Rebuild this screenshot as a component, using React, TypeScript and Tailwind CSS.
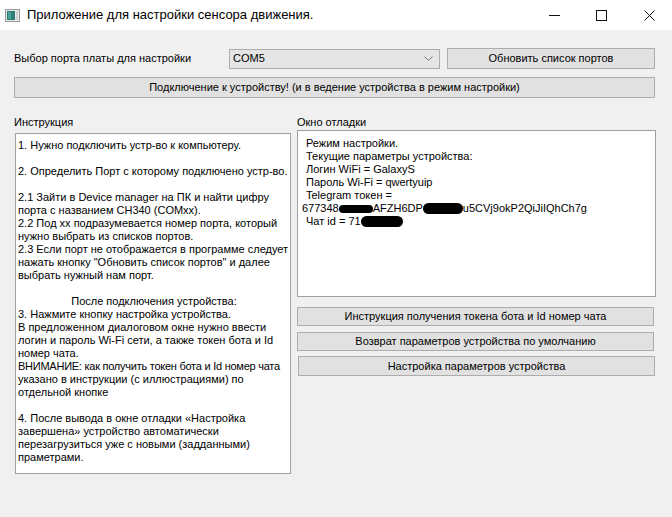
import React from "react";

const ui = { fontFamily: '"Liberation Sans", Arial, sans-serif' };

function Btn({ children, className = "" }: { children: React.ReactNode; className?: string }) {
  return (
    <div
      className={
        "flex items-center justify-center bg-[#e1e1e1] border border-[#adadad] text-[11px] leading-[13px] text-black whitespace-nowrap " +
        className
      }
    >
      {children}
    </div>
  );
}

function Blob({ w, h, className = "" }: { w: number; h: number; className?: string }) {
  return (
    <span
      className={"inline-block bg-black rounded-full align-middle " + className}
      style={{ width: w, height: h }}
    />
  );
}

export default function App() {
  const left: { t: string; c?: boolean; tight?: boolean }[] = [
    { t: "1. Нужно подключить устр-во к компьютеру." },
    { t: "" },
    { t: "2. Определить Порт с которому подключено устр-во." },
    { t: "" },
    { t: "2.1 Зайти в Device manager на ПК и найти цифру" },
    { t: "порта с названием CH340 (COMxx)." },
    { t: "2.2 Под xx подразумевается номер порта, который" },
    { t: "нужно выбрать из списков портов." },
    { t: "2.3 Если порт не отображается в программе следует" },
    { t: 'нажать кнопку "Обновить список портов" и далее' },
    { t: "выбрать нужный нам порт." },
    { t: "" },
    { t: "После подключения устройства:", c: true },
    { t: "3. Нажмите кнопку настройка устройства." },
    { t: "В предложенном диалоговом окне нужно ввести" },
    { t: "логин и пароль Wi-Fi сети, а также токен бота и Id" },
    { t: "номер чата." },
    { t: "ВНИМАНИЕ: как получить токен бота и Id номер чата", tight: true },
    { t: "указано в инструкции (с иллюстрациями) по" },
    { t: "отдельной кнопке" },
    { t: "" },
    { t: "4. После вывода в окне отладки «Настройка" },
    { t: "завершена» устройство автоматически" },
    { t: "перезагрузиться уже с новыми (задданными)" },
    { t: "праметрами." },
  ];

  return (
    <div className="w-[672px] h-[517px] bg-[#f0f0f0] flex flex-col overflow-hidden text-black" style={ui}>
      {/* Title bar */}
      <div className="h-[30px] bg-white flex items-center shrink-0">
        <svg width="15" height="13" viewBox="0 0 15 13" className="ml-[5px] mr-[7px]">
          <rect x="0.5" y="0.5" width="14" height="12" fill="#e8e8e8" stroke="#9a9a9a" />
          <rect x="2" y="2" width="8" height="9" fill="#2f7f78" />
          <rect x="3" y="3" width="3" height="7" fill="#4aa39b" />
          <rect x="11" y="2" width="2" height="9" fill="#d0d0d0" />
        </svg>
        <span className="text-[13px] leading-[20px] text-black">
          Приложение для настройки сенсора движения.
        </span>
        <div className="ml-auto flex items-center h-full">
          <svg width="11" height="11" viewBox="0 0 11 11" className="mr-[36px]">
            <line x1="0" y1="5.5" x2="11" y2="5.5" stroke="#111" strokeWidth="1" />
          </svg>
          <svg width="11" height="11" viewBox="0 0 11 11" className="mr-[37px]">
            <rect x="0.5" y="0.5" width="10" height="10" fill="none" stroke="#111" strokeWidth="1" />
          </svg>
          <svg width="11" height="11" viewBox="0 0 11 11" className="mr-[17px]">
            <path d="M0.5 0.5 L10.5 10.5 M10.5 0.5 L0.5 10.5" stroke="#111" strokeWidth="1" />
          </svg>
        </div>
      </div>

      {/* Row 1 */}
      <div className="mt-[18px] h-[21px] flex items-center pl-[14px]">
        <span className="w-[215px] text-[11px] leading-[13px]">Выбор порта платы для настройки</span>
        <div className="w-[211px] h-[20px] bg-[#e5e5e5] border border-[#adadad] flex items-center pl-[3px] pr-[6px] text-[11px]">
          <span>COM5</span>
          <svg width="9" height="5" viewBox="0 0 9 5" className="ml-auto">
            <path d="M0.5 0.5 L4.5 4.5 L8.5 0.5" fill="none" stroke="#7a7a7a" strokeWidth="1" />
          </svg>
        </div>
        <Btn className="ml-[7px] w-[208px] h-[21px]">Обновить список портов</Btn>
      </div>

      {/* Row 2 */}
      <div className="mt-[8px] pl-[14px]">
        <Btn className="w-[641px] h-[21px]">Подключение к устройству! (и в ведение устройства в режим настройки)</Btn>
      </div>

      {/* Columns */}
      <div className="mt-[18px] flex pl-[14px]">
        <div className="w-[277px] flex flex-col">
          <div className="text-[11px] leading-[13px]">Инструкция</div>
          <div className="mt-[4px] ml-[1px] w-[276px] h-[341px] bg-white border border-[#a0a0a0] pt-[5px] pl-[2px] text-[11px] leading-[13px] overflow-hidden">
            {left.map((l, i) => (
              <div
                key={i}
                className={
                  "h-[13px] whitespace-nowrap " +
                  (l.c ? "text-center " : "") +
                  (l.tight ? "tracking-[-0.25px]" : "")
                }
              >
                {l.t}
              </div>
            ))}
          </div>
        </div>
        <div className="ml-[6px] w-[359px] flex flex-col">
          <div className="text-[11px] leading-[13px]">Окно отладки</div>
          <div className="mt-[1px] w-[359px] h-[167px] bg-white border border-[#a0a0a0] pt-[6px] pl-[4px] text-[11px] leading-[13px]">
            <div className="pl-[4px] h-[13px] whitespace-nowrap">Режим настройки.</div>
            <div className="pl-[4px] h-[13px] whitespace-nowrap">Текущие параметры устройства:</div>
            <div className="pl-[4px] h-[13px] whitespace-nowrap">Логин WiFi = GalaxyS</div>
            <div className="pl-[4px] h-[13px] whitespace-nowrap">Пароль Wi-Fi = qwertyuip</div>
            <div className="pl-[4px] h-[13px] whitespace-nowrap">Telegram токен =</div>
            <div className="h-[13px] whitespace-nowrap flex items-center">
              <span>677348</span>
              <Blob w={34} h={8} className="rounded-sm" />
              <span>AFZH6DP</span>
              <Blob w={40} h={11} />
              <span>u5CVj9okP2QiJiIQhCh7g</span>
            </div>
            <div className="pl-[4px] h-[13px] whitespace-nowrap flex items-center">
              <span>Чат id = 71</span>
              <Blob w={42} h={11} />
            </div>
          </div>
          <Btn className="mt-[10px] w-[357px] h-[19px]">Инструкция получения токена бота и Id номер чата</Btn>
          <Btn className="mt-[6px] w-[357px] h-[19px]">Возврат параметров устройства по умолчанию</Btn>
          <Btn className="mt-[5px] ml-[1px] w-[357px] h-[20px]">Настройка параметров устройства</Btn>
        </div>
      </div>
    </div>
  );
}
